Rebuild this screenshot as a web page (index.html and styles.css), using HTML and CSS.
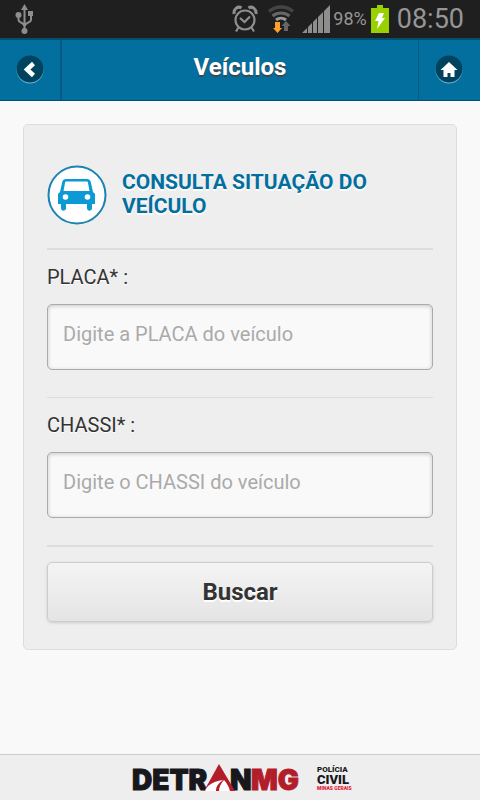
FILE: index.html
```
<!DOCTYPE html>
<html lang="pt-BR">
<head>
<meta charset="utf-8">
<meta name="viewport" content="width=device-width, initial-scale=1">
<title>Veículos</title>
<link rel="stylesheet" href="styles.css">
</head>
<body>
<div class="status">
  <svg class="usb" width="20" height="32" viewBox="0 0 20 32" fill="none" stroke="#8e8e8e" stroke-width="2">
    <path d="M9.500 5V28M3.500 12v5c0 3 6 2.500 6 6.500M16 11v6c0 3-6.500 2.500-6.500 6.500"/>
    <path d="M9.500 1l3.500 6H6z" fill="#8e8e8e" stroke="none"/>
    <circle cx="3.500" cy="12" r="3" fill="#8e8e8e" stroke="none"/>
    <path d="M13 8h5v5h-5z" fill="#8e8e8e" stroke="none"/>
    <circle cx="9.500" cy="28" r="3" fill="#8e8e8e" stroke="none"/>
  </svg>
  <div class="indicators">
    <svg class="alarm" width="26" height="28" viewBox="0 0 26 28" fill="none" stroke="#8e8e8e" stroke-width="2">
      <circle cx="13" cy="15" r="9.500" stroke-width="2.200"/>
      <path d="M8 13l4.500 4L18 11.500M6.500 22.500L4 26.500M19.500 22.500l2.500 4" stroke-width="2.200"/>
      <path d="M2 9C1.500 4 6 .500 9.500 3M24 9C24.500 4 20 .500 16.500 3" stroke-width="3"/>
    </svg>
    <svg class="wifi" width="26" height="28" viewBox="0 0 26 28" fill="none">
      <path d="M1 6.500C8 .500 18 .500 25 6.500" stroke="#444" stroke-width="3.500"/>
      <path d="M4.500 11c5-4 12-4 17 0" stroke="#666" stroke-width="3"/>
      <path d="M8 15c3-2.500 7-2.500 10 0" stroke="#999" stroke-width="3"/>
      <path d="M16 26v-5h-2.500l4.500-5 4.500 5H20v5z" fill="#666"/>
      <path d="M7 17h5v6h2l-4.500 5L5 23h2z" fill="#ffa02d"/>
    </svg>
    <svg class="signal" width="28" height="28" viewBox="0 0 28 28" fill="#8e8e8e">
      <path d="M0 28l5-5v5zM6 28v-6l4-4v10zM11 28V17l4-4v15zM16 28V12l5-5v21zM22 28V6l6-6v28z"/>
    </svg>
    <span class="percent">98%</span>
    <svg class="battery" width="18" height="28" viewBox="0 0 18 28">
      <path d="M0 3h6V0h6v3h6v25H0z" fill="#99d100"/>
      <path d="M8 8h5l-2 5h3L6 24l1.500-8H4z" fill="#fff"/>
    </svg>
    <time class="clock">08:50</time>
  </div>
</div>

<header class="topbar">
  <a class="nav back" href="#" aria-label="Voltar">
    <svg width="28" height="30" viewBox="0 0 28 30">
      <circle cx="14" cy="15" r="13.500" fill="#75b9d6"/>
      <circle cx="14" cy="14" r="13.500" fill="#00435f"/>
      <path d="M17.500 8.500L11 14.500l6.500 6" fill="none" stroke="#fff" stroke-width="4.500"/>
    </svg>
  </a>
  <h1>Veículos</h1>
  <a class="nav home" href="#" aria-label="Início">
    <svg width="28" height="30" viewBox="0 0 28 30">
      <circle cx="14" cy="15" r="13.500" fill="#75b9d6"/>
      <circle cx="14" cy="14" r="13.500" fill="#00435f"/>
      <path d="M14 7l8.500 8h-3v7h-4v-4h-3v4h-4v-7h-3z" fill="#fff"/>
    </svg>
  </a>
</header>

<main>
  <form class="card">
    <div class="heading">
      <svg width="60" height="60" viewBox="0 0 60 60">
        <circle cx="30" cy="31" r="28.500" fill="#fff" stroke="#1b83b1" stroke-width="2"/>
        <path d="M19.500 15h20c3 0 4 1.500 4.500 4l2 9 2 2v10h-3v4c0 3.500-5 3.500-5 0v-4h-21v4c0 3.500-5 3.500-5 0v-4h-3V30l2-2 2-9c.500-2.500 1.500-4 4.500-4z" fill="#0b9ad3"/>
        <path d="M19.500 17.500h20c1 0 1.500.500 1.500 1.500l1.500 8h-26L18 19c0-1 .500-1.500 1.500-1.500z" fill="#fff"/>
        <circle cx="18.500" cy="33" r="2.800" fill="#fff"/>
        <circle cx="40.500" cy="33" r="2.800" fill="#fff"/>
      </svg>
      <h2>CONSULTA SITUAÇÃO DO VEÍCULO</h2>
    </div>
    <div class="field">
      <label for="placa">PLACA* :</label>
      <input id="placa" type="text" placeholder="Digite a PLACA do veículo">
    </div>
    <div class="field">
      <label for="chassi">CHASSI* :</label>
      <input id="chassi" type="text" placeholder="Digite o CHASSI do veículo">
    </div>
    <div class="actions">
      <button type="submit">Buscar</button>
    </div>
  </form>
</main>

<footer>
  <svg class="detran" width="168" height="40" viewBox="0 0 168 40" role="img" aria-label="DETRAN MG">
    <text x="0" y="32">DETR</text>
    <text x="98" y="32">N</text>
    <text class="red" x="119" y="32">MG</text>
    <path d="M87 6l16 27H72z" fill="#b31d29"/>
    <path d="M73 33c2-5 6-9 18-11-4 3-7 6-7 11zM87 33c0-4 2-8 5-11 3 3 5 7 6 11z" fill="#fff"/>
  </svg>
  <svg class="policia" width="32" height="40" viewBox="0 0 32 40" role="img" aria-label="Polícia Civil Minas Gerais">
    <text class="small" x="0" y="14">POLÍCIA</text>
    <text class="civil" x="0" y="26">CIVIL</text>
    <text class="state" x="0" y="32">MINAS GERAIS</text>
  </svg>
</footer>
</body>
</html>
```
FILE: styles.css
```
* { box-sizing: border-box; }

body {
  margin: 0;
  min-height: 100vh;
  display: flex;
  flex-direction: column;
  background: #f9f9f9;
  color: #333;
  font-family: Roboto, "Liberation Sans", sans-serif;
}

svg { display: block; flex: none; overflow: visible; }

.status {
  display: flex;
  justify-content: space-between;
  align-items: center;
  height: 38px;
  padding: 0 16px 0 15px;
  background: #1f1f1f;
  color: #969696;
}

.indicators { display: flex; align-items: center; }
.alarm { margin-right: 10px; }
.wifi { margin-right: 8px; }
.signal { margin-right: 3px; }
.percent { font-size: 18px; line-height: 24px; }
.battery { margin: 0 8px 0 4px; }
.clock { font-size: 27px; line-height: 32px; }

.topbar {
  display: flex;
  height: 63px;
  background: #036f9f;
  border-top: 2px solid #00506f;
  border-bottom: 1px solid #00506f;
}

.nav {
  display: flex;
  justify-content: center;
  align-items: center;
  width: 62px;
}

.back { border-right: 2px solid #045a80; }
.home { padding-right: 2px; border-left: 1px solid #045a80; }

h1 {
  flex: 1;
  margin: 0;
  padding-top: 12px;
  text-align: center;
  color: #fff;
  font-size: 24px;
  line-height: 30px;
  text-shadow: 0 2px 1px #444;
}

main { flex: 1; padding: 23px; }

.card {
  padding: 39px 23px 27px;
  background: #eee;
  border: 1px solid #ddd;
  border-radius: 5px;
}

.heading {
  display: flex;
  align-items: center;
  gap: 15px;
  padding-bottom: 24px;
}

h2 {
  margin: 0;
  color: #036f9f;
  font-size: 21px;
  line-height: 24px;
  text-shadow: 0 2px 0 #fff;
}

.field {
  padding: 15px 0 27px;
  border-top: 2px solid #ddd;
}

.field + .field { border-top-width: 1px; }

label {
  display: block;
  margin-bottom: 15px;
  font-size: 20px;
  line-height: 24px;
  text-shadow: 0 1px 0 #fff;
}

input {
  display: block;
  width: 100%;
  height: 66px;
  padding: 0 15px 6px;
  border: 1px solid #aaa;
  border-radius: 5px;
  background: #f9f9f9;
  box-shadow: inset 0 1px 4px rgba(0, 0, 0, .2);
  color: #333;
  font-family: inherit;
  font-size: 20px;
}

input::placeholder { color: #aaa; }

.actions {
  padding-top: 15px;
  border-top: 2px solid #ddd;
}

button {
  display: block;
  width: 100%;
  height: 60px;
  border: 1px solid #ccc;
  border-radius: 5px;
  background: linear-gradient(#f4f4f4, #e4e4e4);
  box-shadow: 0 1px 3px rgba(0, 0, 0, .15);
  color: #333;
  font-family: inherit;
  font-size: 24px;
  font-weight: bold;
  text-shadow: 0 2px 0 #fff;
}

footer {
  display: flex;
  justify-content: center;
  align-items: center;
  gap: 17px;
  height: 46px;
  border-top: 1px solid #ccc;
  background: #eee;
}

footer text { font-weight: 900; fill: #17171c; }

.detran text {
  font-family: Inter, "Liberation Sans", sans-serif;
  font-size: 28px;
  stroke: #17171c;
  stroke-width: 1px;
}

.detran .red { fill: #b31d29; stroke: #b31d29; }
.policia .small { font-size: 8px; }
.policia .civil { font-size: 13px; }
.policia .state { font-size: 5px; fill: #e51a35; }
```
